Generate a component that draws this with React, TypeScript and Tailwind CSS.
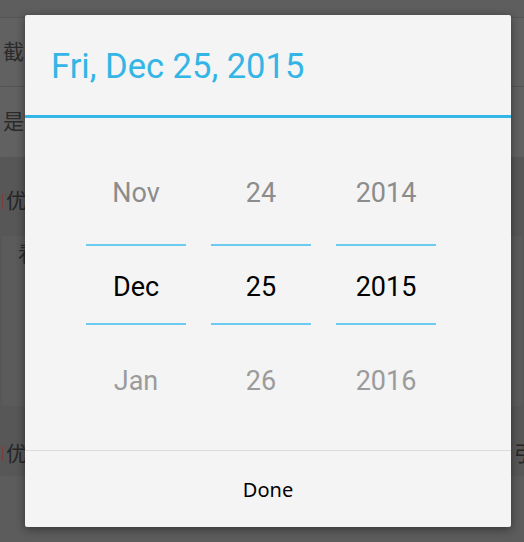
import React from 'react';

const months = ['Nov', 'Dec', 'Jan'];
const days = ['24', '25', '26'];
const years = ['2014', '2015', '2016'];

const PickerColumn: React.FC<{ values: string[] }> = ({ values }) => (
    <div className="flex w-[100px] flex-col">
        <div className="flex h-[60px] items-center justify-center text-[#8c8c8c]">{values[0]}</div>
        <div className="mt-[21px] h-[2px] bg-[#6ccbf0]" />
        <div className="flex h-[77px] items-center justify-center pt-[6px] text-black">{values[1]}</div>
        <div className="h-[2px] bg-[#6ccbf0]" />
        <div className="mt-[26px] flex h-[60px] items-center justify-center text-[#9b9b9b]">{values[2]}</div>
    </div>
);

export default function App() {
    return (
        <div className="relative h-[542px] w-[524px] overflow-hidden bg-[#5c5c5c] font-['Noto_Sans','Noto_Sans_CJK_SC',sans-serif]">
            {/* dimmed screen behind the dialog */}
            <div className="h-[18px] border-b border-[#555] bg-[#5e5e5e]" />
            <div className="flex h-[69px] items-center border-b border-[#555] bg-[#616161] pl-[3px] text-[21px] text-[#2b2b2b]">
                截
            </div>
            <div className="flex h-[70px] items-center bg-[#616161] pl-[3px] text-[21px] text-[#2b2b2b]">
                是
            </div>
            <div className="bg-[#575757] pt-[31px]">
                <div className="flex h-[26px] items-center gap-[3px] pl-[2px] text-[21px] text-[#262626]">
                    <span className="h-[15px] w-[1px] bg-[#7a3d3d]" />
                    优
                </div>
                <div className="mx-[2px] mt-[22px] h-[170px] bg-[#5b5b5b] pl-[16px] pt-[2px] text-[21px] text-[#2b2b2b]">
                    看
                </div>
                <div className="flex h-[70px] items-start justify-between pl-[2px] pt-[32px] text-[21px] text-[#262626]">
                    <div className="flex items-center gap-[3px]">
                        <span className="h-[15px] w-[1px] bg-[#7a3d3d]" />
                        优
                    </div>
                    <span className="mr-[-11px]">引</span>
                </div>
            </div>

            {/* date picker dialog */}
            <div className="absolute left-[25px] top-[15px] flex h-[512px] w-[486px] flex-col rounded-[2px] bg-[#f4f4f4] shadow-[0_2px_10px_rgba(0,0,0,0.45)]">
                <div className="flex h-[100px] items-center pl-[26px] pt-[3px] font-['Roboto',sans-serif] text-[34.5px] text-[#33b5e5]">
                    Fri, Dec 25, 2015
                </div>
                <div className="h-[3px] bg-[#33b5e5]" />
                <div className="flex h-[332px] justify-center gap-[25px] pr-[14px] pt-[45px] font-['Roboto',sans-serif] text-[27px]">
                    <PickerColumn values={months} />
                    <PickerColumn values={days} />
                    <PickerColumn values={years} />
                </div>
                <div className="h-[1px] bg-[#dcdcdc]" />
                <button className="flex flex-1 items-center justify-center pt-[2px] text-[20px] text-black">
                    Done
                </button>
            </div>
        </div>
    );
}
